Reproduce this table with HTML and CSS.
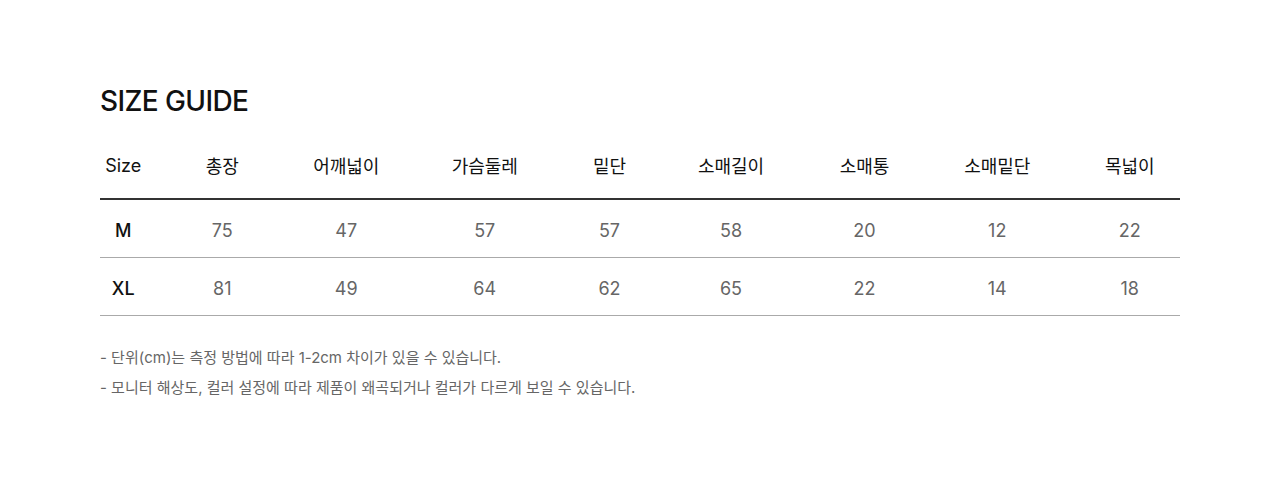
FILE: index.html
```html
<!DOCTYPE html>
<html lang="ko">
<head>
<meta charset="utf-8">
<title>Size Guide</title>
<link rel="stylesheet" href="styles.css">
</head>
<body>
<main class="guide">
  <h2 class="guide-title">SIZE GUIDE</h2>
  <div class="size-table">
    <div class="row head">
      <div class="cell c1">Size</div>
      <div class="cell c2">총장</div>
      <div class="cell c3">어깨넓이</div>
      <div class="cell c4">가슴둘레</div>
      <div class="cell c5">밑단</div>
      <div class="cell c6">소매길이</div>
      <div class="cell c7">소매통</div>
      <div class="cell c8">소매밑단</div>
      <div class="cell c9">목넓이</div>
    </div>
    <div class="row body">
      <div class="cell c1 label">M</div>
      <div class="cell c2">75</div>
      <div class="cell c3">47</div>
      <div class="cell c4">57</div>
      <div class="cell c5">57</div>
      <div class="cell c6">58</div>
      <div class="cell c7">20</div>
      <div class="cell c8">12</div>
      <div class="cell c9">22</div>
    </div>
    <div class="row body">
      <div class="cell c1 label">XL</div>
      <div class="cell c2">81</div>
      <div class="cell c3">49</div>
      <div class="cell c4">64</div>
      <div class="cell c5">62</div>
      <div class="cell c6">65</div>
      <div class="cell c7">22</div>
      <div class="cell c8">14</div>
      <div class="cell c9">18</div>
    </div>
  </div>
  <ul class="notes">
    <li>- 단위(cm)는 측정 방법에 따라 1-2cm 차이가 있을 수 있습니다.</li>
    <li>- 모니터 해상도, 컬러 설정에 따라 제품이 왜곡되거나 컬러가 다르게 보일 수 있습니다.</li>
  </ul>
</main>
</body>
</html>
```
FILE: styles.css
```css
* { box-sizing: border-box; }
html, body { margin: 0; padding: 0; background: #fff; }
body {
  font-family: Inter, "Noto Sans CJK KR", "Noto Sans", sans-serif;
  color: #111;
}
.guide {
  width: 1080px;
  margin: 0 100px;
  padding-top: 84px;
}
.guide-title {
  margin: 0;
  font-size: 28px;
  line-height: 34px;
  font-weight: 500;
  letter-spacing: -0.6px;
  color: #111;
}
.size-table { margin-top: 14px; }
.row {
  display: grid;
  grid-template-columns: 72.5px 111.5px 131.5px 132.5px 123px 127px 133px 132.5px 116.5px;
  align-items: center;
  font-size: 18px;
}
.row.head {
  height: 68px;
  border-bottom: 2px solid #333;
  color: #111;
}
.row.body {
  height: 58px;
  padding-top: 4px;
  border-bottom: 1px solid #aaa;
  color: #666;
}
.cell { text-align: center; }
.c1 { padding-right: 26px; }
.c2 { padding-right: 12px; }
.c3 { padding-right: 7px; }
.c4 { padding-left: 6px; }
.c6 { padding-right: 7px; }
.c9 { padding-left: 16px; }
.cell.label { color: #111; font-weight: 500; }
.notes {
  list-style: none;
  margin: 27px 0 0;
  padding: 0;
  font-size: 15px;
  line-height: 30px;
  color: #666;
}
```
